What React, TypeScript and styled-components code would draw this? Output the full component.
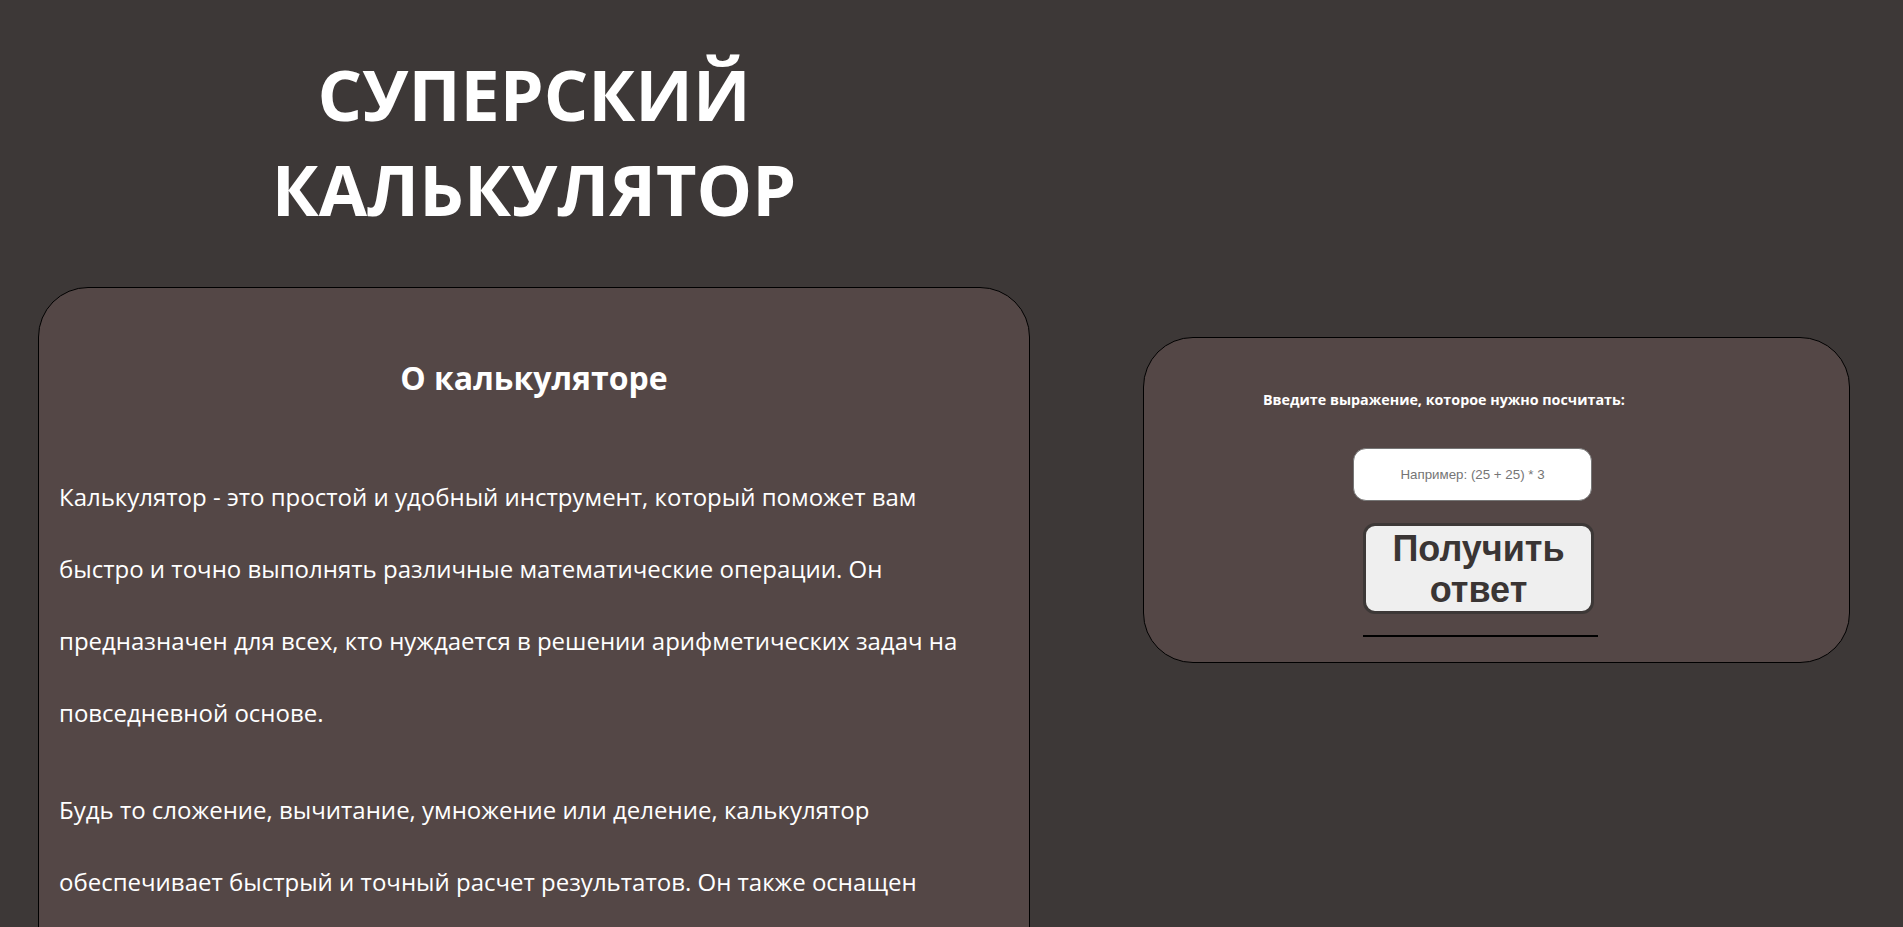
import React from "react";
import styled, { createGlobalStyle } from "styled-components";

const GlobalStyle = createGlobalStyle`
  html, body {
    margin: 0;
    padding: 0;
    background: #3d3837;
  }
  body {
    font-family: "Comic Sans MS", "Open Sans", "Noto Sans", sans-serif;
    color: #ffffff;
  }
`;

const Page = styled.main`
  display: flex;
  align-items: flex-start;
  gap: 113px;
  padding-left: 38px;
  min-height: 927px;
  box-sizing: border-box;
`;

const LeftColumn = styled.section`
  width: 992px;
  display: flex;
  flex-direction: column;
`;

const Title = styled.h1`
  margin: 0;
  padding: 47px 0 50px;
  text-align: center;
  font-size: 70px;
  line-height: 95px;
  font-weight: 700;
  color: #ffffff;
`;

const Card = styled.div`
  background: #544746;
  border: 1px solid #000000;
  border-radius: 50px;
  box-sizing: border-box;
`;

const AboutCard = styled(Card)`
  padding: 62px 20px 120px;
`;

const AboutHeading = styled.h2`
  margin: 0 0 55px;
  text-align: center;
  font-size: 32px;
  line-height: 56px;
  font-weight: 700;
`;

const Paragraph = styled.p`
  margin: 0 0 25px;
  font-size: 24px;
  line-height: 72px;
  white-space: nowrap;
`;

const RightColumn = styled.section`
  padding-top: 337px;
`;

const CalcCard = styled(Card)`
  width: 707px;
  height: 326px;
  padding: 50px 0 0;
  display: flex;
  flex-direction: column;
  align-items: flex-start;
`;

const Label = styled.label`
  margin-left: 119px;
  font-size: 14.3px;
  font-weight: 700;
  line-height: 24px;
`;

const ExpressionInput = styled.input`
  margin: 36px 0 0 209px;
  width: 239px;
  height: 53px;
  box-sizing: border-box;
  border: 1px solid #767676;
  border-radius: 13px;
  background: #ffffff;
  font-family: "Liberation Sans", Arial, sans-serif;
  font-size: 13.333px;
  text-align: center;
  color: #000;
  outline: none;
  &::placeholder {
    color: #757575;
  }
`;

const SubmitButton = styled.button`
  margin: 22px 0 0 219px;
  width: 231px;
  height: 91px;
  box-sizing: border-box;
  padding: 1px 6px;
  border: 3px solid #3d3837;
  border-radius: 12px;
  background: #efefef;
  color: #3a3534;
  font-family: "Liberation Sans", Arial, sans-serif;
  font-size: 36px;
  font-weight: 700;
  line-height: 41px;
  cursor: pointer;
`;

const ResultLine = styled.div`
  margin: 21px 0 0 219px;
  width: 235px;
  height: 0;
  border-bottom: 2px solid #000000;
`;

const paragraphs: string[][] = [
  [
    "Калькулятор - это простой и удобный инструмент, который поможет вам",
    "быстро и точно выполнять различные математические операции. Он",
    "предназначен для всех, кто нуждается в решении арифметических задач на",
    "повседневной основе.",
  ],
  [
    "Будь то сложение, вычитание, умножение или деление, калькулятор",
    "обеспечивает быстрый и точный расчет результатов. Он также оснащен",
  ],
];

export default function App() {
  return (
    <>
      <GlobalStyle />
      <Page>
        <LeftColumn>
          <Title>
            СУПЕРСКИЙ
            <br />
            КАЛЬКУЛЯТОР
          </Title>
          <AboutCard>
            <AboutHeading>О калькуляторе</AboutHeading>
            {paragraphs.map((lines, i) => (
              <Paragraph key={i}>
                {lines.map((line, j) => (
                  <React.Fragment key={j}>
                    {line}
                    {j < lines.length - 1 && <br />}
                  </React.Fragment>
                ))}
              </Paragraph>
            ))}
          </AboutCard>
        </LeftColumn>
        <RightColumn>
          <CalcCard as="form" onSubmit={(e: React.FormEvent) => e.preventDefault()}>
            <Label htmlFor="expr">Введите выражение, которое нужно посчитать:</Label>
            <ExpressionInput id="expr" type="text" placeholder="Например: (25 + 25) * 3" />
            <SubmitButton type="submit">Получить ответ</SubmitButton>
            <ResultLine />
          </CalcCard>
        </RightColumn>
      </Page>
    </>
  );
}
